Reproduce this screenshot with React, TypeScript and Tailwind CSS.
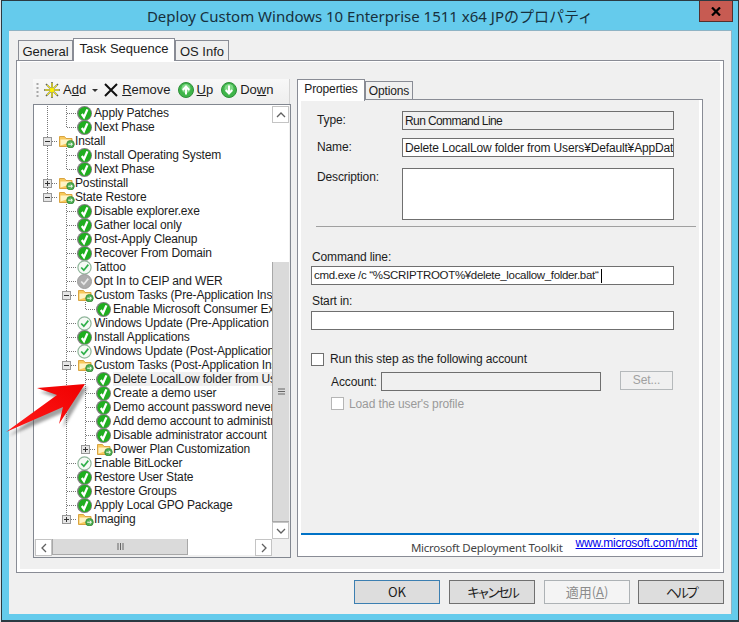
import React from "react";

type IconKind = "check" | "light" | "gray" | "folder";

type TreeItem = {
  // one entry per indent column: "line" keeps a parent's guide going, "none" leaves it blank
  guides: ("line" | "none")[];
  joint: "tee" | "end" | "plus" | "minus" | "plusEnd" | "minusEnd";
  icon: IconKind;
  label: string;
  selected?: boolean;
};

const L = "line" as const;
const N = "none" as const;

const items: TreeItem[] = [
  { guides: [L], joint: "tee", icon: "check", label: "Apply Patches" },
  { guides: [L], joint: "end", icon: "check", label: "Next Phase" },
  { guides: [], joint: "minus", icon: "folder", label: "Install" },
  { guides: [L], joint: "tee", icon: "check", label: "Install Operating System" },
  { guides: [L], joint: "end", icon: "check", label: "Next Phase" },
  { guides: [], joint: "plus", icon: "folder", label: "Postinstall" },
  { guides: [], joint: "minusEnd", icon: "folder", label: "State Restore" },
  { guides: [N], joint: "tee", icon: "check", label: "Disable explorer.exe" },
  { guides: [N], joint: "tee", icon: "check", label: "Gather local only" },
  { guides: [N], joint: "tee", icon: "check", label: "Post-Apply Cleanup" },
  { guides: [N], joint: "tee", icon: "check", label: "Recover From Domain" },
  { guides: [N], joint: "tee", icon: "light", label: "Tattoo" },
  { guides: [N], joint: "tee", icon: "gray", label: "Opt In to CEIP and WER" },
  { guides: [N], joint: "minus", icon: "folder", label: "Custom Tasks (Pre-Application Install)" },
  { guides: [N, L], joint: "end", icon: "check", label: "Enable Microsoft Consumer Experience" },
  { guides: [N], joint: "tee", icon: "light", label: "Windows Update (Pre-Application Installation)" },
  { guides: [N], joint: "tee", icon: "check", label: "Install Applications" },
  { guides: [N], joint: "tee", icon: "light", label: "Windows Update (Post-Application Installation)" },
  { guides: [N], joint: "minus", icon: "folder", label: "Custom Tasks (Post-Application Install)" },
  { guides: [N, L], joint: "tee", icon: "check", label: "Delete LocalLow folder from Users", selected: true },
  { guides: [N, L], joint: "tee", icon: "check", label: "Create a demo user" },
  { guides: [N, L], joint: "tee", icon: "check", label: "Demo account password never expires" },
  { guides: [N, L], joint: "tee", icon: "check", label: "Add demo account to administrators" },
  { guides: [N, L], joint: "tee", icon: "check", label: "Disable administrator account" },
  { guides: [N, L], joint: "plusEnd", icon: "folder", label: "Power Plan Customization" },
  { guides: [N], joint: "tee", icon: "light", label: "Enable BitLocker" },
  { guides: [N], joint: "tee", icon: "check", label: "Restore User State" },
  { guides: [N], joint: "tee", icon: "check", label: "Restore Groups" },
  { guides: [N], joint: "tee", icon: "check", label: "Apply Local GPO Package" },
  { guides: [N], joint: "plusEnd", icon: "folder", label: "Imaging" },
];

function Column({ kind }: { kind: "line" | "none" }) {
  return (
    <svg width="19" height="14" className="shrink-0 block">
      {kind === "line" && <path d="M9.5 0V14" stroke="#777" strokeDasharray="1 1" />}
    </svg>
  );
}

function Joint({ kind }: { kind: TreeItem["joint"] }) {
  const hasBox = kind !== "tee" && kind !== "end";
  const stopsHalf = kind === "end" || kind === "plusEnd" || kind === "minusEnd";
  return (
    <svg width="19" height="14" className="shrink-0 block">
      <path d={stopsHalf ? "M9.5 0V7" : "M9.5 0V14"} stroke="#777" strokeDasharray="1 1" />
      <path d="M10 7.5H19" stroke="#777" strokeDasharray="1 1" />
      {hasBox && (
        <g shapeRendering="crispEdges">
          <rect x="5.5" y="3.5" width="8" height="8" fill="#e6e6e6" stroke="#979797" />
          <path d="M7 7.5H12" stroke="#333" />
          {(kind === "plus" || kind === "plusEnd") && <path d="M9.5 5V10" stroke="#333" />}
        </g>
      )}
    </svg>
  );
}

function TreeIcon({ kind }: { kind: IconKind }) {
  if (kind === "folder") {
    return (
      <svg width="17" height="14" viewBox="0 0 17 14" className="block">
        <path d="M1.5 2.5V12.5H14V4.5H8L6.5 2.5Z" fill="#f8c95c" stroke="#d9a441" />
        <path d="M2.5 5.5H13V8L2.5 11.5Z" fill="#fff3c4" />
        <circle cx="12.5" cy="10.2" r="3.8" fill="#4cae4f" stroke="#2f7e33" strokeWidth="0.7" />
        <path d="M10.2 10.2H14.2M12.8 8.7L14.4 10.2L12.8 11.7" stroke="#fff" fill="none" strokeWidth="1" />
      </svg>
    );
  }
  if (kind === "light") {
    return (
      <svg width="15" height="15" viewBox="0 0 15 15" className="block">
        <circle cx="7.5" cy="7.5" r="6.6" fill="#f5faf5" stroke="#8fb59a" strokeWidth="1.2" />
        <path d="M4.2 7.5L6.8 10.2L11.3 4.6" stroke="#2fb04a" strokeWidth="1.7" fill="none" />
      </svg>
    );
  }
  if (kind === "gray") {
    return (
      <svg width="15" height="15" viewBox="0 0 15 15" className="block">
        <circle cx="7.5" cy="7.5" r="7" fill="#adadad" stroke="#9c9c9c" />
        <path d="M4.2 7.5L6.8 10.2L11.3 4.6" stroke="#e8e8e8" strokeWidth="1.7" fill="none" />
      </svg>
    );
  }
  return (
    <svg width="15" height="15" viewBox="0 0 15 15" className="block">
      <circle cx="7.5" cy="7.5" r="7.5" fill="#7f7f7f" />
      <circle cx="7.8" cy="7.5" r="6.4" fill="#1fae1f" />
      <path d="M4.8 8L7 11.2L10.4 3.4" stroke="#fff" strokeWidth="2.3" fill="none" />
    </svg>
  );
}

function TreeRow({ item }: { item: TreeItem }) {
  return (
    <div className="flex h-[14px] items-center shrink-0 whitespace-nowrap">
      {item.guides.map((g, i) => (
        <Column key={i} kind={g} />
      ))}
      <Joint kind={item.joint} />
      <div className="w-[17px] ml-[1px] shrink-0">
        <TreeIcon kind={item.icon} />
      </div>
      <span
        className={`text-[12px] leading-[14px] tracking-[-0.15px] text-[#1c1c1c] ${
          item.selected ? "bg-[#f0f0f0] flex-1" : ""
        }`}
      >
        {item.label}
      </span>
    </div>
  );
}

function Chevron({ d }: { d: string }) {
  return (
    <svg width="10" height="10" viewBox="0 0 10 10">
      <path d={d} stroke="#606060" strokeWidth="1.3" fill="none" />
    </svg>
  );
}

function ScrollButton({ d }: { d: string }) {
  return (
    <div className="w-[17px] h-[17px] bg-white border border-[#c4c4c4] flex items-center justify-center shrink-0">
      <Chevron d={d} />
    </div>
  );
}

function RoundArrow({ down }: { down?: boolean }) {
  return (
    <svg width="16" height="16" viewBox="0 0 16 16" className="block">
      <circle cx="8" cy="8" r="7.5" fill="#3fb54a" stroke="#2f8f3a" />
      <circle cx="8" cy="6.5" r="4.5" fill="#7fd886" />
      <path
        d={down ? "M8 3.5V11M4.8 8L8 11.5L11.2 8" : "M8 12.5V5M4.8 8L8 4.5L11.2 8"}
        stroke="#fff"
        strokeWidth="2"
        fill="none"
      />
    </svg>
  );
}

function Field({ className, children }: { className: string; children?: React.ReactNode }) {
  return (
    <div
      className={`border border-[#6f6f6f] h-[19px] px-[2px] flex items-center overflow-hidden whitespace-nowrap text-[#1c1c1c] ${className}`}
    >
      {children}
    </div>
  );
}

function DialogButton({ className, children }: { className: string; children: React.ReactNode }) {
  return (
    <div
      className={`w-[86px] h-[24px] border flex items-center justify-center text-[13px] font-['Noto_Sans_CJK_JP',sans-serif] ${className}`}
    >
      {children}
    </div>
  );
}

export default function App() {
  return (
    <div className="w-[739px] h-[622px] bg-[#dfe3e6] pl-[1px] overflow-hidden relative font-['Liberation_Sans',sans-serif]">
      <div className="w-[738px] h-[622px] bg-[#65cbec] border border-t-[1px] border-b-2 border-[#2b3a42] flex flex-col">
        {/* title bar */}
        <div className="h-[29px] flex shrink-0">
          <div className="flex-1 pl-[39px] pt-[5px] text-center text-[15px] leading-[20px] text-[#17303d] font-['Noto_Sans','Noto_Sans_CJK_JP',sans-serif]">
            Deploy Custom Windows 10 Enterprise 1511 x64 JPのプロパティ
          </div>
          <div className="w-[34px] h-[21px] mr-[5px] bg-[#c75b52] border-x border-b border-[#54302e] flex items-center justify-center">
            <svg width="10" height="9" viewBox="0 0 10 9">
              <path d="M1 0.5L9 8.5M9 0.5L1 8.5" stroke="#000" strokeWidth="2.2" />
            </svg>
          </div>
        </div>

        {/* dialog body */}
        <div className="w-[723px] h-[584px] ml-[7px] bg-[#f0f0f0] border-t border-r border-[#8fb3c4] flex flex-col shrink-0">
          <div className="flex items-end h-[23px] mt-[7px] pl-[9px] text-[13px] text-[#1c1c1c] shrink-0">
            <div className="w-[55px] h-[21px] bg-[#f0f0f0] border border-b-0 border-[#898c95] text-center leading-[22px]">
              General
            </div>
            <div className="w-[102px] h-[23px] bg-white border border-b-0 border-[#898c95] text-center leading-[20px] relative z-10">
              Task Sequence
            </div>
            <div className="w-[54px] h-[21px] bg-[#f0f0f0] border border-b-0 border-[#898c95] text-center leading-[22px]">
              OS Info
            </div>
          </div>

          {/* outer tab panel */}
          <div className="w-[708px] h-[513px] ml-[7px] -mt-[1px] bg-white border border-[#898c95] px-[3px] pb-[3px] pt-[1px] shrink-0">
            <div className="h-full bg-[#f0f0f0] flex pl-[13px] pt-[17px]">
              {/* left column */}
              <div className="w-[258px] shrink-0 flex flex-col">
                <div className="w-[257px] h-[25px] pb-[3px] bg-gradient-to-b from-[#f8f8f8] to-[#eeeeee] border-r border-[#d4d4d4] flex items-center text-[13px] text-[#1c1c1c] shrink-0">
                  <svg width="3" height="15" className="ml-[3px]">
                    <path d="M1.5 0V15" stroke="#a8a8a8" strokeDasharray="2 2" strokeWidth="2" />
                  </svg>
                  <svg width="16" height="16" viewBox="0 0 16 16" className="ml-[5px]">
                    <path d="M8 0V16M0 8H16M2 2L14 14M14 2L2 14" stroke="#3a3a20" strokeWidth="1.6" opacity="0.75" />
                    <path d="M8 1V15M1 8H15M3 3L13 13M13 3L3 13" stroke="#fff200" strokeWidth="1" />
                    <circle cx="8" cy="8" r="2" fill="#fff200" />
                  </svg>
                  <span className="ml-[3px]">
                    A<span className="underline">d</span>d
                  </span>
                  <svg width="6" height="3" className="ml-[6px]">
                    <path d="M0 0H6L3 3Z" fill="#333" />
                  </svg>
                  <svg width="14" height="14" viewBox="0 0 14 14" className="ml-[6px]">
                    <path d="M1 1L13 13M13 1L1 13" stroke="#111" strokeWidth="2" />
                  </svg>
                  <span className="ml-[4px]">
                    <span className="underline">R</span>emove
                  </span>
                  <span className="ml-[7px]">
                    <RoundArrow />
                  </span>
                  <span className="ml-[3px]">
                    <span className="underline">U</span>p
                  </span>
                  <span className="ml-[8px]">
                    <RoundArrow down />
                  </span>
                  <span className="ml-[3px]">
                    Do<span className="underline">w</span>n
                  </span>
                </div>

                {/* task tree */}
                <div className="w-[258px] h-[454px] border border-[#828790] bg-[#f0f0f0] flex flex-col shrink-0">
                  <div className="flex h-[434px] shrink-0">
                    <div className="w-[238px] bg-white overflow-hidden pl-[4px] pt-[1px] flex flex-col">
                      {items.map((item, i) => (
                        <TreeRow key={i} item={item} />
                      ))}
                    </div>
                    <div className="w-[17px] pt-[1px] flex flex-col bg-white">
                      <ScrollButton d="M1 7L5 3L9 7" />
                      <div className="h-[139px]" />
                      <div className="h-[260px] bg-[#dadada] border-l border-b border-[#a8a8a8] flex items-center justify-center">
                        <svg width="7" height="7">
                          <path d="M0 1H7M0 3.5H7M0 6H7" stroke="#666" />
                        </svg>
                      </div>
                      <ScrollButton d="M1 3L5 7L9 3" />
                    </div>
                  </div>
                  <div className="flex h-[16px] pl-[1px] shrink-0">
                    <ScrollButton d="M7 1L3 5L7 9" />
                    <div className="w-[136px] bg-[#dadada] border-x border-b border-[#a8a8a8] flex items-center justify-center">
                      <svg width="7" height="7">
                        <path d="M1 0V7M3.5 0V7M6 0V7" stroke="#666" />
                      </svg>
                    </div>
                    <div className="w-[67px] bg-white" />
                    <ScrollButton d="M3 1L7 5L3 9" />
                  </div>
                </div>
              </div>

              {/* right column */}
              <div className="w-[406px] ml-[6px] shrink-0 flex flex-col text-[12px] tracking-[-0.12px] text-[#1c1c1c]">
                <div className="flex items-end h-[21px] shrink-0">
                  <div className="w-[68px] h-[22px] -mb-[1px] bg-white border border-b-0 border-[#898c95] text-center leading-[18px] relative z-10">
                    Properties
                  </div>
                  <div className="w-[48px] h-[19px] bg-[#f0f0f0] border border-b-0 border-[#898c95] text-center leading-[19px]">
                    Options
                  </div>
                </div>
                <div className="h-[458px] -mt-[1px] bg-white border border-[#898c95] px-[3px] flex flex-col shrink-0">
                  <div className="h-[433px] bg-[#f0f0f0] flex flex-col shrink-0 pt-[11px]">
                    <div className="flex items-center pl-[16px]">
                      <span className="w-[85px] -mt-[2px]">Type:</span>
                      <Field className="w-[272px] bg-[#f0f0f0] tracking-[-0.6px]">Run Command Line</Field>
                    </div>
                    <div className="flex items-center pl-[16px] mt-[8px]">
                      <span className="w-[85px] -mt-[2px]">Name:</span>
                      <Field className="w-[272px] bg-white tracking-[-0.15px]">
                        Delete LocalLow folder from Users¥Default¥AppData
                      </Field>
                    </div>
                    <div className="flex pl-[16px] mt-[11px]">
                      <span className="w-[85px]">Description:</span>
                      <div className="w-[272px] h-[52px] bg-white border border-[#6f6f6f]" />
                    </div>
                    <div className="ml-[15px] w-[380px] h-[1px] mt-[6px] bg-[#a0a0a0] shrink-0" />

                    <div className="ml-[11px] mt-[22px] leading-[16px]">Command line:</div>
                    <Field className="w-[363px] ml-[10px] mt-[1px] bg-white border-[#2b6a9c] text-[11.5px] tracking-[-0.32px]">
                      cmd.exe /c “%SCRIPTROOT%¥delete_locallow_folder.bat“
                      <span className="w-[1px] h-[14px] bg-black ml-[3px]" />
                    </Field>
                    <div className="ml-[11px] mt-[8px] leading-[16px]">Start in:</div>
                    <Field className="w-[363px] ml-[10px] mt-[2px] bg-white" />

                    <div className="flex items-center ml-[10px] mt-[23px] h-[13px]">
                      <div className="w-[13px] h-[13px] bg-white border border-[#6f6f6f]" />
                      <span className="ml-[6px] -mt-[1px]">Run this step as the following account</span>
                    </div>
                    <div className="flex items-center ml-[30px] mt-[6px]">
                      <span className="w-[50px]">Account:</span>
                      <Field className="w-[220px] bg-[#f0f0f0]" />
                      <div className="w-[53px] h-[19px] ml-[19px] -mt-[2px] bg-[#f0f0f0] border border-[#b5b9bb] text-center leading-[16px] text-[#a0a0a0]">
                        Set...
                      </div>
                    </div>
                    <div className="flex items-center ml-[30px] mt-[6px] h-[13px]">
                      <div className="w-[13px] h-[13px] bg-white border border-[#b5b5b5]" />
                      <span className="ml-[5px] text-[#9a9a9a]">Load the user's profile</span>
                    </div>
                  </div>
                  <div className="h-[2px] bg-[#0072c6] shrink-0" />
                  <div className="flex-1 overflow-hidden flex justify-end pr-[2px]">
                    <span className="text-[11.5px] leading-[16px] mt-[5px] text-[#444] font-['Noto_Sans',sans-serif] tracking-[-0.25px]">
                      Microsoft Deployment Toolkit
                    </span>
                    <span className="ml-[13px] text-[12px] tracking-[-0.25px] leading-[14px] mt-[1px] text-[#0000ee] underline">
                      www.microsoft.com/mdt
                    </span>
                  </div>
                </div>
              </div>
            </div>
          </div>

          {/* dialog buttons */}
          <div className="flex justify-end gap-[9px] mt-[7px] pr-[7px] text-[#1c1c1c]">
            <DialogButton className="bg-[#dddddd] border-[#3c7fb1]">OK</DialogButton>
            <DialogButton className="bg-[#dddddd] border-[#707070] tracking-[-3px]">キャンセル</DialogButton>
            <DialogButton className="bg-[#f4f4f4] border-[#adb2b5] text-[#8c8c8c]">
              <span>
                適用(<span className="underline">A</span>)
              </span>
            </DialogButton>
            <DialogButton className="bg-[#dddddd] border-[#707070] -ml-[1px] tracking-[-3px]">ヘルプ</DialogButton>
          </div>
        </div>
      </div>

      {/* red callout arrow pasted over the screenshot */}
      <svg width="95" height="65" viewBox="0 0 95 65" className="absolute left-0 top-[378px]">
        <defs>
          <linearGradient id="arrowRed" x1="0" y1="1" x2="1" y2="0">
            <stop offset="0" stopColor="#ff1a1a" />
            <stop offset="1" stopColor="#f00000" />
          </linearGradient>
          <filter id="arrowShadow" x="-20%" y="-20%" width="140%" height="150%">
            <feGaussianBlur stdDeviation="1.5" />
          </filter>
        </defs>
        <polygon points="86,7 38,12 58,19 7,56 65,31 61,48" fill="#555" opacity="0.55" filter="url(#arrowShadow)" transform="translate(2 2)" />
        <polygon points="85,6 37,10 57,17 6,54 63,29 59,46" fill="url(#arrowRed)" />
      </svg>
    </div>
  );
}
